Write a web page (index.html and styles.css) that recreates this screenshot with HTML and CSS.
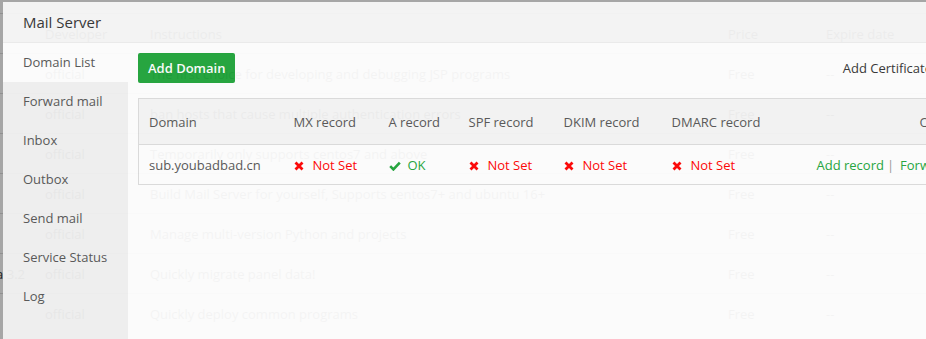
FILE: index.html
```html
<!DOCTYPE html>
<html lang="en">
<head>
    <meta charset="utf-8"/>
    <title>Mail Server</title>
    <link rel="stylesheet" href="styles.css">
</head>
<body>
    <div class="page">
        <table class="soft-list">
            <colgroup>
                <col class="c-name"><col class="c-dev"><col class="c-desc"><col class="c-price"><col class="c-expire">
            </colgroup>
            <thead>
                <tr><th class="name"></th><th>Developer</th><th>Instructions</th><th>Price</th><th>Expire date</th></tr>
            </thead>
            <tbody>
                <tr><td class="name"></td><td>official</td><td>The first choice for developing and debugging JSP programs</td><td>Free</td><td>--</td></tr>
                <tr><td class="name"></td><td>official</td><td>ban hosts that cause multiple authentication errors</td><td>Free</td><td>--</td></tr>
                <tr><td class="name"></td><td>official</td><td>Temporarily only supports centos7 and above</td><td>Free</td><td>--</td></tr>
                <tr><td class="name"></td><td>official</td><td>Build Mail Server for yourself, Supports centos7+ and ubuntu 16+</td><td>Free</td><td>--</td></tr>
                <tr><td class="name"></td><td>official</td><td>Manage multi-version Python and projects</td><td>Free</td><td>--</td></tr>
                <tr><td class="name">Pagoda 3.2</td><td>official</td><td>Quickly migrate panel data!</td><td>Free</td><td>--</td></tr>
                <tr><td class="name"></td><td>official</td><td>Quickly deploy common programs</td><td>Free</td><td>--</td></tr>
            </tbody>
        </table>
    </div>

    <div class="shade"></div>

    <div class="layer">
        <div class="layer-title">Mail Server</div>
        <div class="layer-body">
            <ul class="tab-nav">
                <li class="on">Domain List</li>
                <li>Forward mail</li>
                <li>Inbox</li>
                <li>Outbox</li>
                <li>Send mail</li>
                <li>Service Status</li>
                <li>Log</li>
            </ul>
            <div class="tab-con">
                <div class="toolbar">
                    <button class="btn btn-success">Add Domain</button>
                    <a class="btn-plain" href="#">Add Certificate</a>
                </div>
                <table class="domain-table">
                    <colgroup>
                        <col class="c-domain"><col class="c-mx"><col class="c-a"><col class="c-spf"><col class="c-dkim"><col class="c-dmarc"><col class="c-opt">
                    </colgroup>
                    <thead>
                        <tr>
                            <th>Domain</th>
                            <th>MX record</th>
                            <th>A record</th>
                            <th>SPF record</th>
                            <th>DKIM record</th>
                            <th>DMARC record</th>
                            <th class="text-right">Operation</th>
                        </tr>
                    </thead>
                    <tbody>
                        <tr>
                            <td>sub.youbadbad.cn</td>
                            <td class="bad"><svg class="ico-x" viewBox="0 0 10 10"><path d="M1.5 1.5L8.5 8.5M8.5 1.5L1.5 8.5"/></svg>Not Set</td>
                            <td class="good"><svg class="ico-ok" viewBox="0 0 12 10"><path d="M1.2 5.2L4.4 8.4L10.8 1.6"/></svg>OK</td>
                            <td class="bad"><svg class="ico-x" viewBox="0 0 10 10"><path d="M1.5 1.5L8.5 8.5M8.5 1.5L1.5 8.5"/></svg>Not Set</td>
                            <td class="bad"><svg class="ico-x" viewBox="0 0 10 10"><path d="M1.5 1.5L8.5 8.5M8.5 1.5L1.5 8.5"/></svg>Not Set</td>
                            <td class="bad"><svg class="ico-x" viewBox="0 0 10 10"><path d="M1.5 1.5L8.5 8.5M8.5 1.5L1.5 8.5"/></svg>Not Set</td>
                            <td class="opt"><a href="#">Add record</a><span class="sep">|</span><a href="#">Forward</a><span class="sep">|</span><a href="#">Delete</a></td>
                        </tr>
                    </tbody>
                </table>
            </div>
        </div>
    </div>
</body>
</html>
```

FILE: styles.css
```css
body {
    margin: 0;
    font-family: "Open Sans", "Noto Sans", sans-serif;
    font-size: 13px;
    color: #333;
    background-color: #fff;
    overflow: hidden;
}

/* page behind the dialog */
.page {
    padding-top: 13px;
}

.soft-list {
    margin-left: -100px;
    width: 1100px;
    table-layout: fixed;
    border-collapse: collapse;
}

.soft-list .c-name { width: 135px; }
.soft-list .c-dev { width: 105px; }
.soft-list .c-desc { width: 578px; }
.soft-list .c-price { width: 98px; }

.soft-list th,
.soft-list td {
    height: 39px;
    padding: 0 10px;
    border-top: 1px solid #ddd;
    text-align: left;
    font-weight: normal;
    white-space: nowrap;
    overflow: hidden;
}

.soft-list .name {
    text-align: right;
}

.shade {
    position: fixed;
    inset: 0;
    background-color: rgba(0, 0, 0, 0.35);
}

/* dialog */
.layer {
    position: absolute;
    left: 3px;
    top: 2px;
    width: 1000px;
    height: 420px;
    background-color: #fff;
    opacity: 0.95;
}

.layer-title {
    height: 40px;
    line-height: 40px;
    padding: 0 20px;
    font-size: 15px;
    color: #333;
    background-color: #f7f7f7;
    border-bottom: 1px solid #eee;
}

.layer-body {
    display: flex;
    height: 379px;
}

.tab-nav {
    width: 125px;
    margin: 0;
    padding: 0;
    list-style: none;
    background-color: #f2f2f2;
}

.tab-nav li {
    height: 39px;
    line-height: 39px;
    padding-left: 20px;
    color: #555;
}

.tab-nav li.on {
    background-color: #fff;
}

.tab-con {
    flex: 1;
    padding: 10px;
}

.toolbar {
    display: flex;
    align-items: center;
    justify-content: space-between;
    height: 30px;
}

.btn {
    height: 30px;
    padding: 0 10px;
    border: 0;
    border-radius: 2px;
    font: inherit;
    font-weight: 600;
    cursor: pointer;
}

.btn-success {
    background-color: #20a53a;
    color: #fff;
}

.btn-plain {
    margin-right: 61px;
    color: #333;
    text-decoration: none;
}

.domain-table {
    margin-top: 15px;
    width: 854px;
    table-layout: fixed;
    border-collapse: collapse;
    border: 1px solid #ddd;
}

.c-domain { width: 145px; }
.c-mx { width: 95px; }
.c-a { width: 80px; }
.c-spf { width: 95px; }
.c-dkim { width: 108px; }
.c-dmarc { width: 145px; }

.domain-table th {
    height: 45px;
    padding: 0 10px;
    text-align: left;
    font-weight: normal;
    color: #555;
    background-color: #f6f6f6;
    border-bottom: 1px solid #ddd;
    white-space: nowrap;
}

.domain-table th.text-right {
    text-align: right;
}

.domain-table td {
    height: 39px;
    padding: 0 10px;
    color: #555;
    white-space: nowrap;
}

.bad {
    color: #f00 !important;
}

.good {
    color: #20a53a !important;
}

.ico-x,
.ico-ok {
    fill: none;
    stroke-linecap: butt;
    vertical-align: -1px;
}

.ico-x {
    width: 10px;
    height: 10px;
    margin-right: 9px;
    stroke: #f00;
    stroke-width: 2.8;
}

.ico-ok {
    width: 12px;
    height: 10px;
    margin-right: 7px;
    stroke: #20a53a;
    stroke-width: 2.6;
}

.opt a {
    color: #20a53a;
    text-decoration: none;
}

.opt .sep {
    margin: 0 6px 0 3px;
    color: #999;
}
```
